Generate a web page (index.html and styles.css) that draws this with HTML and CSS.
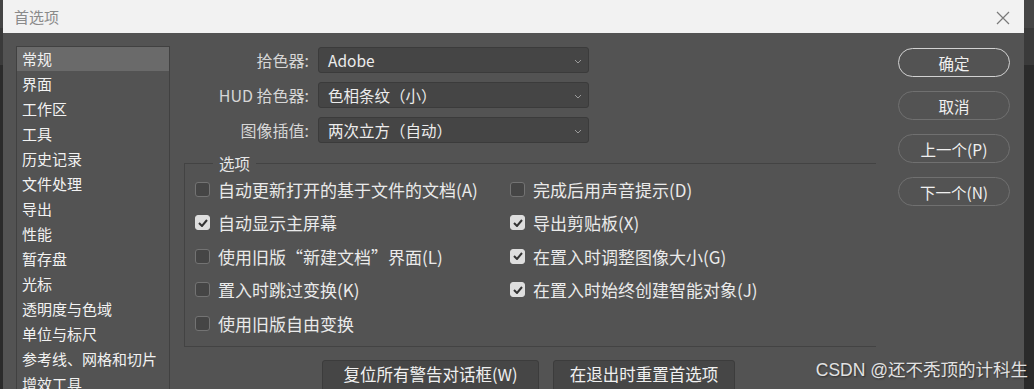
FILE: index.html
```html
<!DOCTYPE html>
<html>
<head>
  <meta charset="utf-8">
  <link rel="stylesheet" href="styles.css">
</head>
<body>
  <div class="dialog">
    <div class="titlebar">
      <span class="title">首选项</span>
      <svg class="close" width="14" height="14" viewBox="0 0 14 14">
        <path d="M1 1 L13 13 M13 1 L1 13" stroke="#7a7a7a" stroke-width="1.2" fill="none"/>
      </svg>
    </div>

    <div class="content">
      <ul class="nav">
        <li class="active">常规</li>
        <li>界面</li>
        <li>工作区</li>
        <li>工具</li>
        <li>历史记录</li>
        <li>文件处理</li>
        <li>导出</li>
        <li>性能</li>
        <li>暂存盘</li>
        <li>光标</li>
        <li>透明度与色域</li>
        <li>单位与标尺</li>
        <li>参考线、网格和切片</li>
        <li>增效工具</li>
      </ul>

      <div class="main">
        <div class="form">
          <span class="label">拾色器:</span>
          <div class="select">Adobe<svg class="chev" width="8" height="5" viewBox="0 0 8 5"><path d="M1 1 L4 4 L7 1" stroke="#9a9a9a" fill="none"/></svg></div>
          <span class="label">HUD 拾色器:</span>
          <div class="select">色相条纹（小）<svg class="chev" width="8" height="5" viewBox="0 0 8 5"><path d="M1 1 L4 4 L7 1" stroke="#9a9a9a" fill="none"/></svg></div>
          <span class="label">图像插值:</span>
          <div class="select">两次立方（自动）<svg class="chev" width="8" height="5" viewBox="0 0 8 5"><path d="M1 1 L4 4 L7 1" stroke="#9a9a9a" fill="none"/></svg></div>
        </div>

        <fieldset class="group">
          <legend>选项</legend>
          <div class="opts">
            <div class="opt"><span class="box"></span>自动更新打开的基于文件的文档(A)</div>
            <div class="opt"><span class="box"></span>完成后用声音提示(D)</div>
            <div class="opt"><span class="box on"><svg width="10" height="8" viewBox="0 0 10 8"><path d="M1 4 L4 7 L9 1" stroke="#333" stroke-width="2" fill="none"/></svg></span>自动显示主屏幕</div>
            <div class="opt"><span class="box on"><svg width="10" height="8" viewBox="0 0 10 8"><path d="M1 4 L4 7 L9 1" stroke="#333" stroke-width="2" fill="none"/></svg></span>导出剪贴板(X)</div>
            <div class="opt"><span class="box"></span>使用旧版“新建文档”界面(L)</div>
            <div class="opt"><span class="box on"><svg width="10" height="8" viewBox="0 0 10 8"><path d="M1 4 L4 7 L9 1" stroke="#333" stroke-width="2" fill="none"/></svg></span>在置入时调整图像大小(G)</div>
            <div class="opt"><span class="box"></span>置入时跳过变换(K)</div>
            <div class="opt"><span class="box on"><svg width="10" height="8" viewBox="0 0 10 8"><path d="M1 4 L4 7 L9 1" stroke="#333" stroke-width="2" fill="none"/></svg></span>在置入时始终创建智能对象(J)</div>
            <div class="opt"><span class="box"></span>使用旧版自由变换</div>
          </div>
        </fieldset>

        <div class="actions">
          <button class="flat wide">复位所有警告对话框(W)</button>
          <button class="flat">在退出时重置首选项</button>
        </div>
      </div>

      <div class="side">
        <button class="pill primary">确定</button>
        <button class="pill">取消</button>
        <button class="pill">上一个(P)</button>
        <button class="pill">下一个(N)</button>
      </div>
    </div>
  </div>

  <div class="watermark">CSDN @还不秃顶的计科生</div>
</body>
</html>
```

FILE: styles.css
```css
body {
  margin: 0;
  height: 389px;
  overflow: hidden;
  position: relative;
  background: linear-gradient(to bottom, #454545 0, #454545 28px, #3a3a3a 28px, #3a3a3a 65px, #2b2b2b 65px);
  font-family: "Noto Sans CJK SC", "Noto Sans", sans-serif;
}

.dialog {
  width: 1021px;
  height: 389px;
  margin-left: 3px;
  background: #535353;
  overflow: hidden;
}

.titlebar {
  height: 33px;
  background: #f2f2f2;
  display: flex;
  align-items: center;
  justify-content: space-between;
  padding: 0 14px 0 11px;
}

.title {
  color: #8a8a8a;
  font-size: 15px;
}

.close {
  margin-top: 2px;
}

.content {
  display: flex;
  height: 356px;
}

.nav {
  list-style: none;
  margin: 13px 0 0 13px;
  padding: 0;
  width: 152px;
  border: 1px solid #414141;
  border-bottom: none;
}

.nav li {
  height: 25px;
  line-height: 23px;
  padding-left: 5px;
  color: #f2f2f2;
  font-size: 15px;
}

.nav li.active {
  background: #6a6a6a;
  height: 24px;
  margin-bottom: 1px;
}

.main {
  width: 728px;
  padding-top: 14px;
}

.form {
  display: grid;
  grid-template-columns: 139px 271px;
  column-gap: 9px;
  row-gap: 9px;
  align-items: center;
}

.label {
  text-align: right;
  color: #d6d6d6;
  font-size: 16px;
}

.select {
  height: 26px;
  box-sizing: border-box;
  background: #454545;
  border: 1px solid #3b3b3b;
  border-radius: 3px;
  display: flex;
  align-items: center;
  justify-content: space-between;
  padding: 0 6px 0 9px;
  color: #ececec;
  font-size: 15.5px;
}

.chev {
  margin-top: 2px;
}

.group {
  margin: 10px 0 0 14px;
  width: 692px;
  box-sizing: border-box;
  border: 1px solid #434343;
  border-right: none;
  padding: 6px 0 13px 10px;
}

.group legend {
  margin-left: 18px;
  padding: 0 6px;
  color: #e6e6e6;
  font-size: 15.5px;
  line-height: 20px;
}

.opts {
  display: grid;
  grid-template-columns: 315px auto;
  row-gap: 13.5px;
}

.opt {
  display: flex;
  align-items: center;
  height: 20px;
  color: #eaeaea;
  font-size: 17px;
}

.box {
  width: 15px;
  height: 15px;
  box-sizing: border-box;
  border: 1px solid #737373;
  background: #454545;
  border-radius: 3px;
  margin-right: 8px;
  display: flex;
  align-items: center;
  justify-content: center;
}

.box.on {
  background: #dedede;
  border-color: #dedede;
}

.actions {
  display: flex;
  gap: 14px;
  margin: 13px 0 0 152px;
}

.flat {
  height: 32px;
  width: 182px;
  background: #464646;
  border: 1px solid #3c3c3c;
  border-radius: 3px;
  color: #f0f0f0;
  font-family: inherit;
  font-size: 16.5px;
  padding: 0 0 4px;
}

.flat.wide {
  width: 217px;
}

.side {
  display: flex;
  flex-direction: column;
  gap: 14px;
  padding: 15px 0 0 0;
  width: 112px;
}

.pill {
  height: 29px;
  background: #535353;
  border: 1px solid #707070;
  border-radius: 15px;
  color: #f0f0f0;
  font-family: inherit;
  font-size: 15.5px;
  padding: 0;
}

.pill.primary {
  border: 1.5px solid #d2d2d2;
}

.watermark {
  position: absolute;
  right: 6px;
  bottom: 8px;
  color: #e2e2e2;
  font-family: "Liberation Sans", "Noto Sans CJK SC", sans-serif;
  font-size: 17.5px;
  text-shadow: 1px 1px 2px rgba(0,0,0,0.45);
}
```
